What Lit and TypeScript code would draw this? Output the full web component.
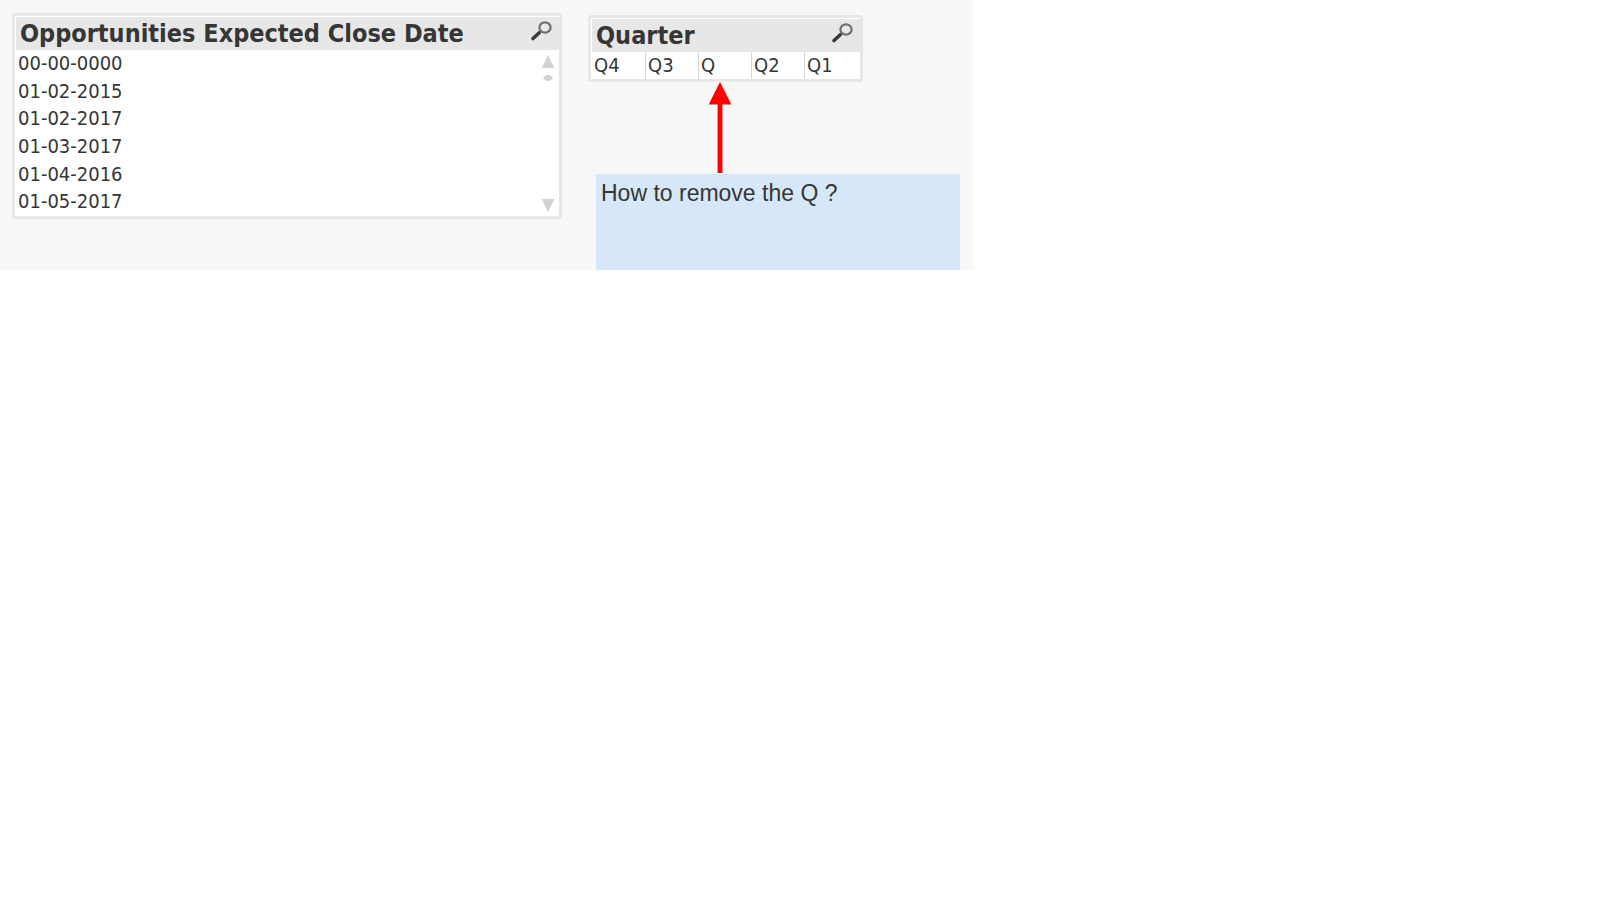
import { LitElement, html, css, svg } from "lit";
import { customElement, property } from "lit/decorators.js";

@customElement("list-panel")
class ListPanel extends LitElement {
  static styles = css`
    :host {
      display: block;
      box-sizing: border-box;
      border: 3px solid #e7e7e7;
      border-radius: 3px;
      background: #ffffff;
      color: #363636;
      padding: 1px 0 0 1px;
      font-family: Tahoma, "DejaVu Sans Condensed", "Noto Sans", sans-serif;
    }
    .head {
      display: flex;
      align-items: flex-start;
      justify-content: space-between;
      height: 33px;
      padding: 0 7px 0 4px;
      background: #e7e7e7;
    }
    .title {
      margin: 0;
      font-size: 25px;
      line-height: 33px;
      font-weight: 700;
      white-space: nowrap;
    }
    .search {
      display: block;
      margin: 3px 0 0;
      padding: 0;
      border: 0;
      background: none;
      width: 22px;
      height: 22px;
      cursor: pointer;
    }
    .glass {
      display: block;
    }
  `;

  @property() heading = "";

  render() {
    return html`
      <header class="head">
        <h2 class="title">${this.heading}</h2>
        <button class="search" type="button" aria-label="Search ${this.heading}">
          <svg class="glass" width="22" height="22" viewBox="0 0 22 22" fill="none">
            <path d="M11 11 L8.5 13.5" stroke="#4a4a4a" stroke-width="2.4" />
            <path d="M9 13 L3 18.5" stroke="#3a3a3a" stroke-width="3.6" stroke-linecap="round" />
            <ellipse cx="15" cy="7.5" rx="5.6" ry="5.2" stroke="#707070" stroke-width="2.2" fill="#e9e9e9" />
          </svg>
        </button>
      </header>
      <slot></slot>
    `;
  }
}

@customElement("app-root")
class AppRoot extends LitElement {
  static styles = css`
    :host {
      display: block;
      min-height: 100vh;
      background: #ffffff;
      color: #363636;
    }
    .sheet {
      display: flex;
      align-items: flex-start;
      gap: 26px;
      box-sizing: border-box;
      max-width: 973px;
      padding: 13px 13px 0 12px;
      background: #f8f8f8;
    }
    .dates {
      flex: 0 1 550px;
    }
    .side {
      flex: 1 1 0;
      min-width: 0;
      padding-top: 2px;
    }
    .quarter {
      width: 275px;
    }
    .body {
      display: flex;
      justify-content: space-between;
    }
    .values,
    .cells {
      margin: 0;
      padding: 0;
      list-style: none;
    }
    .values {
      display: grid;
      grid-auto-rows: 1fr;
      flex: 1;
      min-height: 166px;
    }
    .value {
      display: block;
      width: 100%;
      margin: 0;
      padding: 0 2px;
      border: 0;
      background: none;
      color: inherit;
      font-family: Tahoma, "DejaVu Sans Condensed", "Noto Sans", sans-serif;
      font-size: 20px;
      line-height: 27px;
      text-align: left;
      cursor: pointer;
    }
    .scroll {
      display: flex;
      flex-direction: column;
      padding: 5px 4px 4px 0;
      gap: 6px;
    }
    .step {
      display: block;
      margin: 0;
      padding: 0;
      border: 0;
      background: none;
      cursor: pointer;
    }
    .down {
      margin-top: auto;
    }
    .mark {
      display: block;
    }
    .cells {
      display: grid;
      grid-template-columns: repeat(5, 1fr);
      padding-right: 3px;
    }
    .cell + .cell {
      border-left: 1px solid #d6d6d6;
    }
    .arrow {
      display: block;
      margin-left: 120px;
    }
    .note {
      margin: 0 0 0 8px;
      box-sizing: border-box;
      min-height: 96px;
      padding: 5px;
      border-radius: 2px 2px 0 0;
      background: #d6e7f7;
      font-family: Arial, "Liberation Sans", sans-serif;
      font-size: 23px;
      line-height: 28px;
    }
  `;

  dates = ["00-00-0000", "01-02-2015", "01-02-2017", "01-03-2017", "01-04-2016", "01-05-2017"];
  quarters = ["Q4", "Q3", "Q", "Q2", "Q1"];

  mark(shape: unknown, height: number) {
    return html`<svg class="mark" width="14" height=${height} viewBox="0 0 14 ${height}" fill="#d2d2d2">${shape}</svg>`;
  }

  render() {
    return html`
      <main class="sheet">
        <list-panel class="dates" heading="Opportunities Expected Close Date">
          <div class="body">
            <ul class="values">
              ${this.dates.map((d) => html`<li><button class="value" type="button">${d}</button></li>`)}
            </ul>
            <div class="scroll">
              <button class="step" type="button" aria-label="Scroll up">
                ${this.mark(svg`<path d="M7 0 L13.4 13 H0.6 Z" />`, 13)}
              </button>
              ${this.mark(svg`<path d="M2 4 Q4.5 0.7 7 0.7 Q9.5 0.7 12 4 Q9.5 7.3 7 7.3 Q4.5 7.3 2 4 Z" />`, 8)}
              <button class="step down" type="button" aria-label="Scroll down">
                ${this.mark(svg`<path d="M7 13 L13.4 0 H0.6 Z" />`, 13)}
              </button>
            </div>
          </div>
        </list-panel>
        <section class="side">
          <list-panel class="quarter" heading="Quarter">
            <ul class="cells">
              ${this.quarters.map((q) => html`<li class="cell"><button class="value" type="button">${q}</button></li>`)}
            </ul>
          </list-panel>
          <svg class="arrow" width="24" height="92" viewBox="0 0 24 92" fill="#ff0000" aria-hidden="true">
            <path d="M12 0 L23.3 22.4 H14.4 V91 H9.6 V22.4 H0.7 Z" />
          </svg>
          <p class="note">How to remove the Q ?</p>
        </section>
      </main>
    `;
  }
}
